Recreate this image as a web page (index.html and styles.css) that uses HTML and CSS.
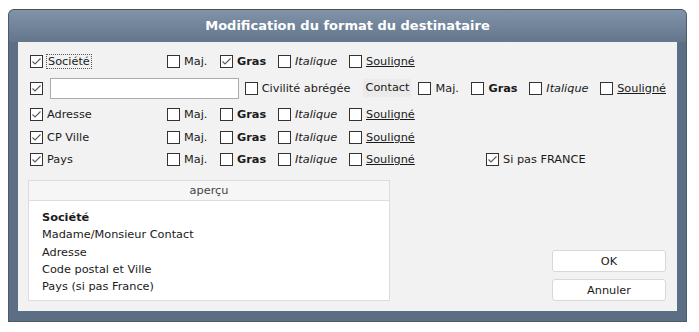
FILE: index.html
```html
<!DOCTYPE html>
<html lang="fr">
<head>
    <meta charset="UTF-8">
    <meta name="viewport" content="width=device-width, initial-scale=1.0">
    <title>Modification du format du destinataire</title>
    <link rel="stylesheet" href="styles.css">
</head>
<body>

    <div class="window">
        <div class="titlebar">Modification du format du destinataire</div>
        <div class="panel">

            <div class="row">
                <div class="cell cell-field">
                    <span class="cb"><svg viewBox="0 0 11 11"><polyline points="1.5,5.5 4,8 9.5,2.5"/></svg></span>
                    <span class="focus">Société</span>
                </div>
                <div class="cell cell-maj"><span class="cb"></span>Maj.</div>
                <div class="cell cell-gras"><span class="cb"><svg viewBox="0 0 11 11"><polyline points="1.5,5.5 4,8 9.5,2.5"/></svg></span><b>Gras</b></div>
                <div class="cell cell-ital"><span class="cb"></span><i>Italique</i></div>
                <div class="cell cell-soul"><span class="cb"></span><u>Souligné</u></div>
            </div>

            <div class="row row-contact">
                <span class="cb"><svg viewBox="0 0 11 11"><polyline points="1.5,5.5 4,8 9.5,2.5"/></svg></span>
                <input type="text" class="civ-input">
                <div class="cell cell-civ"><span class="cb"></span>Civilité abrégée</div>
                <div class="contact-label">Contact</div>
                <div class="cell cell-maj"><span class="cb"></span>Maj.</div>
                <div class="cell cell-gras"><span class="cb"></span><b>Gras</b></div>
                <div class="cell cell-ital"><span class="cb"></span><i>Italique</i></div>
                <div class="cell"><span class="cb"></span><u>Souligné</u></div>
            </div>

            <div class="row">
                <div class="cell cell-field"><span class="cb"><svg viewBox="0 0 11 11"><polyline points="1.5,5.5 4,8 9.5,2.5"/></svg></span>Adresse</div>
                <div class="cell cell-maj"><span class="cb"></span>Maj.</div>
                <div class="cell cell-gras"><span class="cb"></span><b>Gras</b></div>
                <div class="cell cell-ital"><span class="cb"></span><i>Italique</i></div>
                <div class="cell cell-soul"><span class="cb"></span><u>Souligné</u></div>
            </div>

            <div class="row row-short">
                <div class="cell cell-field"><span class="cb"><svg viewBox="0 0 11 11"><polyline points="1.5,5.5 4,8 9.5,2.5"/></svg></span>CP Ville</div>
                <div class="cell cell-maj"><span class="cb"></span>Maj.</div>
                <div class="cell cell-gras"><span class="cb"></span><b>Gras</b></div>
                <div class="cell cell-ital"><span class="cb"></span><i>Italique</i></div>
                <div class="cell cell-soul"><span class="cb"></span><u>Souligné</u></div>
            </div>

            <div class="row">
                <div class="cell cell-field"><span class="cb"><svg viewBox="0 0 11 11"><polyline points="1.5,5.5 4,8 9.5,2.5"/></svg></span>Pays</div>
                <div class="cell cell-maj"><span class="cb"></span>Maj.</div>
                <div class="cell cell-gras"><span class="cb"></span><b>Gras</b></div>
                <div class="cell cell-ital"><span class="cb"></span><i>Italique</i></div>
                <div class="cell cell-soul"><span class="cb"></span><u>Souligné</u></div>
                <div class="cell"><span class="cb"><svg viewBox="0 0 11 11"><polyline points="1.5,5.5 4,8 9.5,2.5"/></svg></span>Si pas FRANCE</div>
            </div>

            <div class="bottom">
                <div class="preview">
                    <div class="preview-head">aperçu</div>
                    <div class="preview-body">
                        <div><b>Société</b></div>
                        <div>Madame/Monsieur Contact</div>
                        <div>Adresse</div>
                        <div>Code postal et Ville</div>
                        <div>Pays (si pas France)</div>
                    </div>
                </div>
                <div class="buttons">
                    <button class="btn">OK</button>
                    <button class="btn">Annuler</button>
                </div>
            </div>

        </div>
    </div>

</body>
</html>
```

FILE: styles.css
```css
body {
    margin: 0;
    padding: 9px 0 0 8px;
    background-color: #fff;
    font-family: "DejaVu Sans", Verdana, sans-serif;
    font-size: 11.3px;
    color: #1a1a1a;
}
.window {
    width: 677px;
    height: 311px;
    border: 1px solid #4d5a68;
    border-top-color: #505050;
    border-radius: 6px 6px 0 0;
    background-color: #5b6e83;
    display: flex;
    flex-direction: column;
}
.titlebar {
    height: 32px;
    background: linear-gradient(#8193a9, #63768c);
    border-radius: 5px 5px 0 0;
    color: #fff;
    font-weight: bold;
    font-size: 13px;
    display: flex;
    align-items: center;
    justify-content: center;
    padding-bottom: 1px;
}
.panel {
    margin: 0 9px 10px 9px;
    flex: 1;
    background-color: #f2f2f2;
    padding: 8px 11px 10px 10px;
    display: flex;
    flex-direction: column;
}
/* Option rows */
.row {
    height: 23px;
    padding-left: 2px;
    display: flex;
    align-items: center;
}
.row-contact {
    height: 30px;
}
.row-short {
    height: 22px;
}
.cell {
    display: flex;
    align-items: center;
    white-space: nowrap;
}
.cell-field { width: 137px; }
.cell-maj { width: 53px; }
.cell-gras { width: 58px; }
.cell-ital { width: 71px; }
.cell-soul { width: 137px; }
.cell-civ {
    width: 118px;
    margin-left: 6px;
}
.cb {
    width: 11px;
    height: 11px;
    border: 1px solid #333;
    background-color: #fff;
    margin-right: 4px;
    flex-shrink: 0;
    display: inline-flex;
}
.cb svg {
    width: 11px;
    height: 11px;
    fill: none;
    stroke: #5a5a5a;
    stroke-width: 1.1;
}
.focus {
    border: 1px dotted #555;
    padding: 0 1px;
    margin-left: -1px;
    line-height: 13px;
}
.civ-input {
    width: 187px;
    height: 19px;
    margin: 0 0 0 3px;
    padding: 0;
    border: 1px solid #acacac;
    background-color: #fff;
}
.contact-label {
    width: 46px;
    padding-left: 3px;
    height: 18px;
    line-height: 18px;
    background-color: #ebebeb;
    margin-right: 7px;
}
/* Preview and buttons */
.bottom {
    margin-top: 9px;
    display: flex;
    justify-content: space-between;
    align-items: flex-end;
}
.preview {
    width: 360px;
    height: 119px;
    border: 1px solid #dcdcdc;
    background-color: #fff;
}
.preview-head {
    height: 19px;
    line-height: 19px;
    text-align: center;
    background-color: #f6f6f6;
    border-bottom: 1px solid #dcdcdc;
    color: #444;
}
.preview-body {
    padding: 8px 0 0 13px;
    line-height: 17.3px;
}
.buttons {
    display: flex;
    flex-direction: column;
    gap: 7px;
}
.btn {
    width: 114px;
    height: 22px;
    background-color: #fff;
    border: 1px solid #d8d8d8;
    border-radius: 3px;
    font-family: "DejaVu Sans", Verdana, sans-serif;
    font-size: 11.3px;
    color: #1a1a1a;
    padding: 0;
}
```
